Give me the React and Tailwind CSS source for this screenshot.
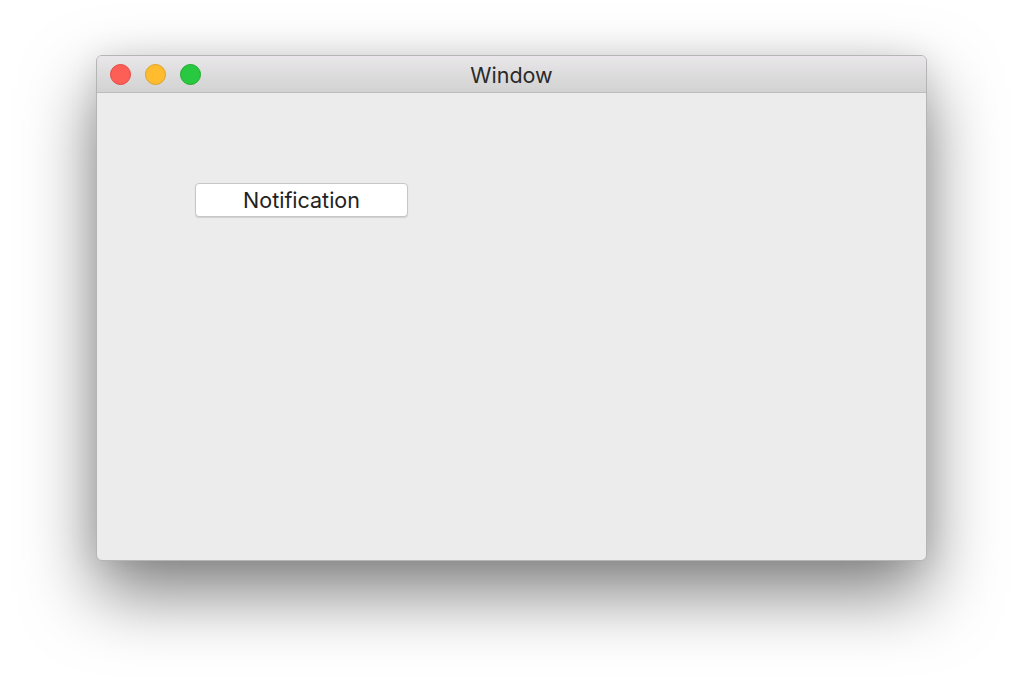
export default function App() {
  return (
    <div className="w-full h-[699px] bg-white pt-[55px] pl-[96px] overflow-hidden" style={{ fontFamily: "Inter, 'Liberation Sans', sans-serif" }}>
      <div className="w-[831px] h-[506px] rounded-[6px] bg-[#ececec] flex flex-col overflow-hidden border border-[#b5b5b5] shadow-[0_32px_70px_rgba(0,0,0,0.5),0_0_30px_rgba(0,0,0,0.08)]">
        {/* Title bar */}
        <div className="relative h-[37px] flex-shrink-0 flex items-center px-[13px] gap-[14px] bg-gradient-to-b from-[#e9e7e9] to-[#d2d2d2] border-b border-[#bdbdbd]">
          <span className="w-[21px] h-[21px] rounded-full bg-[#fd5f57] border border-[#e2463f]" />
          <span className="w-[21px] h-[21px] rounded-full bg-[#febc2e] border border-[#e0a028]" />
          <span className="w-[21px] h-[21px] rounded-full bg-[#28c840] border border-[#1daa2c]" />
          <span className="absolute inset-0 pt-[3px] flex items-center justify-center text-[21.5px] text-[#2a2a2a] pointer-events-none">
            Window
          </span>
        </div>

        {/* Content */}
        <div className="flex-1 pt-[90px] pl-[98px]">
          <button className="w-[213px] h-[34px] pt-[1px] rounded-[4px] bg-white border border-[#c6c6c6] shadow-[0_1px_1px_rgba(0,0,0,0.12)] text-[21.5px] text-[#222] leading-none">
            Notification
          </button>
        </div>
      </div>
    </div>
  );
}
